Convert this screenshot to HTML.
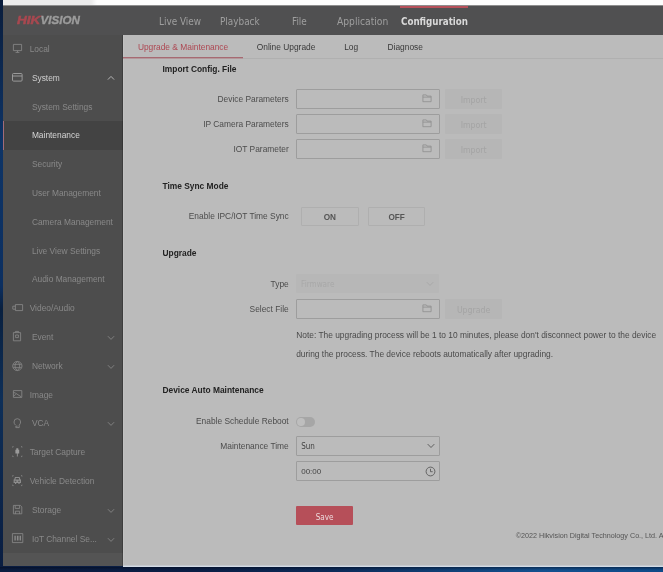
<!DOCTYPE html>
<html><head><meta charset="utf-8">
<style>
*{box-sizing:border-box;margin:0;padding:0}
html,body{width:663px;height:572px;overflow:hidden}
body{position:relative;background:#0d2f5e;font-family:"Liberation Sans",Arial,sans-serif;font-size:8.4px;color:#4a4a4a}
.abs{position:absolute}
#desk-left{left:0;top:0;width:3px;height:572px;background:linear-gradient(#0a1d3c,#0e3466 25%,#0c2f60 50%,#09203f 54%,#0e2f58 70%,#0a1d40)}
#desk-bot{left:0;top:565px;width:663px;height:7px;background:linear-gradient(rgba(0,0,0,0.0) 0,rgba(0,0,0,0.0) 28%,rgba(0,5,20,0.45) 29%,rgba(0,0,0,0) 75%),linear-gradient(90deg,#0a1c40,#0a1e45 30%,#0c2a58 50%,#0f3d72 65%,#13508f 82%,#0e4a88)}
#desk-bot:before{content:"";position:absolute;left:123px;top:0;width:540px;height:2px;background:linear-gradient(#c4c8ce 0,#c4c8ce 50%,#d3dbe5 50%,#d3dbe5 100%)}
#topwhite{left:3px;top:0;width:660px;height:5px;background:linear-gradient(90deg,#ececec 0,#ececec 88px,#fdfdfd 94px)}
#header{will-change:transform;left:3px;top:5px;width:660px;height:30px;background:#505051;border-top:1px solid #8e8e8e}
#sidebar{will-change:transform;left:3px;top:35px;width:119.7px;height:531px;background:#4d4d4d}
#main{will-change:transform;left:123px;top:35px;width:540px;height:530px;background:#bbbbbb}
.nav{position:absolute;top:0;height:29px;line-height:31px;font-family:"DejaVu Sans Condensed","DejaVu Sans","Liberation Sans",sans-serif;font-size:9.9px;color:#9f9f9f;white-space:nowrap}
.nav.act{color:#d9d9d9;font-weight:bold}
.logo{position:absolute;left:13.6px;top:-1.5px;height:29px;font:italic bold 11.6px/29.5px "Liberation Sans",sans-serif;white-space:nowrap}
.logo span{position:absolute;top:0;left:0;display:block;transform-origin:0 50%}
.logo .r{color:#a84850;-webkit-text-stroke:0.5px #a84850;transform:scaleX(1.17)}.logo .g{color:#9c9c9c;-webkit-text-stroke:0.35px #9c9c9c;left:23.8px;letter-spacing:0.05px}
.si{position:absolute;left:0;width:119.7px;height:28.8px;line-height:28.8px;color:#898989;white-space:nowrap}
.si span{position:absolute;left:0;top:0}
.si svg{position:absolute;overflow:visible}
.si.act{background:#434343;color:#d6d6d6}
.ic{fill:none;stroke:#858585;stroke-width:0.9}
.tab{position:absolute;top:0;height:23px;line-height:25.6px;color:#3a3a3a;white-space:nowrap}
.tab.act{color:#ad4752}
.h{position:absolute;font-weight:bold;color:#222;white-space:nowrap;line-height:10px}
.lbl{position:absolute;text-align:right;white-space:nowrap;line-height:10px;color:#4c4c4c}
.inp{position:absolute;border:1px solid #9d9d9d;border-radius:1px;background:#bbbbbb;height:19.6px}
.inp svg,.btn svg{position:absolute;overflow:visible}
.fo{fill:none;stroke:#909090;stroke-width:0.85}
.btn{position:absolute;height:19px;background:#b6b6b6;color:#a4a4a4;text-align:center;line-height:23px;border-radius:1px;font-family:"DejaVu Sans Condensed","DejaVu Sans","Liberation Sans",sans-serif;font-size:8.7px}
</style></head><body>
<div id="desk-left" class="abs"></div>
<div id="desk-bot" class="abs"></div>
<div id="topwhite" class="abs"></div>
<div id="header" class="abs">
  <div class="logo"><span class="r">HIK</span><span class="g">VISION</span></div>
  <div class="nav" style="left:156px">Live View</div>
  <div class="nav" style="left:217px">Playback</div>
  <div class="nav" style="left:289px">File</div>
  <div class="nav" style="left:334px;font-size:10.2px">Application</div>
  <div class="nav act" style="left:398px;font-size:9.7px">Configuration</div>
  <div class="abs" style="left:397.4px;top:0;width:67.6px;height:2px;background:#b6505a"></div>
</div>
<div id="sidebar" class="abs">
  <div class="si" style="top:0px"><span style="left:26.7px">Local</span>
    <svg style="left:9px;top:8px" width="12" height="12" viewBox="0 0 12 12"><path class="ic" d="M1.4 1.4h8.2v6.2h-8.2z M3.6 9.4h3.8 M5.5 7.6v1.8"/></svg></div>
  <div class="si" style="top:29px;color:#cfcfcf"><span style="left:28.9px">System</span>
    <svg style="left:9px;top:8px" width="12" height="12" viewBox="0 0 12 12"><path class="ic" style="stroke:#a2a2a2" d="M1.5 1.5h7.6q1 0 1 1v5.6q0 1 -1 1h-7.6q-1 0 -1 -1v-5.6q0 -1 1 -1z M0.5 4h9.6"/></svg>
    <svg style="left:104px;top:11px" width="8" height="6" viewBox="0 0 8 6"><path d="M0.9 4.6L4 1.4L7.1 4.6" fill="none" stroke="#b4b4b4" stroke-width="1"/></svg></div>
  <div class="si" style="top:58px"><span style="left:28.9px">System Settings</span></div>
  <div class="si act" style="top:86px"><span style="left:28.9px">Maintenance</span><div class="abs" style="left:0;top:0;width:1px;height:28.8px;background:#a26c78"></div></div>
  <div class="si" style="top:115px"><span style="left:28.9px">Security</span></div>
  <div class="si" style="top:144px"><span style="left:28.9px">User Management</span></div>
  <div class="si" style="top:173px"><span style="left:28.9px">Camera Management</span></div>
  <div class="si" style="top:202px"><span style="left:28.9px">Live View Settings</span></div>
  <div class="si" style="top:230px"><span style="left:28.9px">Audio Management</span></div>
  <div class="si" style="top:259px"><span style="left:26.7px">Video/Audio</span>
    <svg style="left:9px;top:9px" width="12" height="12" viewBox="0 0 12 12"><path class="ic" d="M3.4 1.6h7.2v6h-7.2z M3.4 3.2h-2.6v3h2.6"/></svg></div>
  <div class="si" style="top:288px"><span style="left:28.9px">Event</span>
    <svg style="left:9px;top:7.4px" width="12" height="13" viewBox="0 0 12 13"><path class="ic" d="M1.4 2.6h7.2v8.2h-7.2z M3.4 2.6v-1.2h3.2v1.2 M3.6 5h2.8v2.6h-2.8z"/></svg>
    <svg style="left:104px;top:12px" width="8" height="6" viewBox="0 0 8 6"><path d="M0.9 1.2L4 4.4L7.1 1.2" fill="none" stroke="#808080" stroke-width="1"/></svg></div>
  <div class="si" style="top:317px"><span style="left:28.9px">Network</span>
    <svg style="left:9px;top:7.5px" width="12" height="12" viewBox="0 0 12 12"><path class="ic" d="M5.35 1.4a4.6 4.6 0 1 0 0.01 0z M5.35 1.4q-2.4 2 -2.4 4.6t2.4 4.6 M5.35 1.4q2.4 2 2.4 4.6t-2.4 4.6 M1.1 4.3h8.5 M1.1 7.7h8.5"/></svg>
    <svg style="left:104px;top:12px" width="8" height="6" viewBox="0 0 8 6"><path d="M0.9 1.2L4 4.4L7.1 1.2" fill="none" stroke="#808080" stroke-width="1"/></svg></div>
  <div class="si" style="top:346px"><span style="left:26.7px">Image</span>
    <svg style="left:9px;top:8px" width="12" height="12" viewBox="0 0 12 12"><path class="ic" d="M1.4 1.6h8.4v6.8h-8.4z M1.6 3.4l2 0.8l5.6 3.6 M1.6 7l2.2 -1.6"/></svg></div>
  <div class="si" style="top:374px"><span style="left:28.9px">VCA</span>
    <svg style="left:9px;top:8px" width="12" height="13" viewBox="0 0 12 13"><path class="ic" d="M3.6 8.2q-1.6 -1.4 -1.6 -3.2a3.3 3.3 0 0 1 6.6 0q0 1.8 -1.4 3.2v2.4h-3.4v-1.4h1.8"/></svg>
    <svg style="left:104px;top:12px" width="8" height="6" viewBox="0 0 8 6"><path d="M0.9 1.2L4 4.4L7.1 1.2" fill="none" stroke="#808080" stroke-width="1"/></svg></div>
  <div class="si" style="top:403px"><span style="left:26.7px">Target Capture</span>
    <svg style="left:9px;top:8px" width="12" height="13" viewBox="0 0 12 13"><path d="M4.3 2.2h2v1.6h0.9v3.6h-1.5v3h-0.8v-3h-1.5v-3.6h0.9z" fill="#9a9a9a"/><path class="ic" d="M0.6 1.6v-1h1 M9 0.6h1v1 M0.6 9.6v1h1 M10 9.6v1h-1" style="stroke-width:0.8"/></svg></div>
  <div class="si" style="top:432px"><span style="left:26.7px">Vehicle Detection</span>
    <svg style="left:9px;top:8px" width="12" height="13" viewBox="0 0 12 13"><path transform="translate(0,-0.7)" d="M3 2.8h4.6l0.8 2.4h0.6v3.4h-1.4v1h-1.2v-1h-2.2v1h-1.2v-1h-1.4v-3.4h0.6z M3.8 3.8l-0.4 1.4h3.8l-0.4 -1.4z M2.8 6.4v1h1.6v-1z M6.2 6.4v1h1.6v-1z" fill="#8c8c8c" fill-rule="evenodd"/><path class="ic" d="M0.6 1.6v-1h1 M9 0.6h1v1 M0.6 9.6v1h1 M10 9.6v1h-1" style="stroke-width:0.8"/></svg></div>
  <div class="si" style="top:461px"><span style="left:28.9px">Storage</span>
    <svg style="left:9px;top:7.6px" width="12" height="12" viewBox="0 0 12 12"><path class="ic" d="M1.4 1.4h7l1.4 1.4v7h-8.4z M3.2 1.6v2.8h4.4v-2.8 M3.4 10v-2.8h4.2v2.8"/></svg>
    <svg style="left:104px;top:12px" width="8" height="6" viewBox="0 0 8 6"><path d="M0.9 1.2L4 4.4L7.1 1.2" fill="none" stroke="#808080" stroke-width="1"/></svg></div>
  <div class="si" style="top:490px"><span style="left:28.9px">IoT Channel Se...</span>
    <svg style="left:8px;top:7px" width="13" height="12" viewBox="0 0 13 12"><path class="ic" d="M1.4 1.6h10.4v9h-10.4z"/><path d="M3.4 3.8h1.4v4.8h-1.4z M5.9 3.8h1.6v4.8h-1.6z M8.6 3.8h1.4v4.8h-1.4z" fill="#8a8a8a"/></svg>
    <svg style="left:104px;top:12px" width="8" height="6" viewBox="0 0 8 6"><path d="M0.9 1.2L4 4.4L7.1 1.2" fill="none" stroke="#808080" stroke-width="1"/></svg></div>
  <div class="abs" style="left:0;top:517.7px;width:119.7px;height:13.3px;background:#545454"></div>
  <div class="abs" style="left:119px;top:0;width:1px;height:531px;background:rgba(0,0,0,0.2)"></div>
</div>
<div id="main" class="abs"><div class="abs" style="left:0;top:0;width:1px;height:530px;background:#c1c1c1"></div><div class="abs" style="left:-0.3px;top:0;width:540.3px;height:530px">
  <div class="abs" style="left:0;top:23px;width:540.3px;height:1px;background:#b0b0b0"></div>
  <div class="tab act" style="left:15.2px">Upgrade &amp; Maintenance</div>
  <div class="abs" style="left:0;top:22px;width:119.8px;height:2px;background:linear-gradient(#a66a72 0,#a66a72 50%,#b4979b 50%,#b4979b 100%)"></div>
  <div class="tab" style="left:134px">Online Upgrade</div>
  <div class="tab" style="left:221.5px">Log</div>
  <div class="tab" style="left:264.8px">Diagnose</div>

  <div class="h" style="left:39.8px;top:28.6px">Import Config. File</div>
  <div class="lbl" style="right:374.3px;top:59px">Device Parameters</div>
  <div class="lbl" style="right:374.3px;top:84px">IP Camera Parameters</div>
  <div class="lbl" style="right:374.3px;top:109px">IOT Parameter</div>
  <div class="inp" style="left:172.9px;top:54px;width:144px"><svg style="left:125px;top:4px" width="12" height="10" viewBox="0 0 12 10"><path class="fo" d="M0.9 0.9h3.4l0.8 1.2h4v5.6h-8.2z M0.9 3.1h8.2"/></svg></div>
  <div class="inp" style="left:172.9px;top:79px;width:144px"><svg style="left:125px;top:4px" width="12" height="10" viewBox="0 0 12 10"><path class="fo" d="M0.9 0.9h3.4l0.8 1.2h4v5.6h-8.2z M0.9 3.1h8.2"/></svg></div>
  <div class="inp" style="left:172.9px;top:104.3px;width:144px"><svg style="left:125px;top:4px" width="12" height="10" viewBox="0 0 12 10"><path class="fo" d="M0.9 0.9h3.4l0.8 1.2h4v5.6h-8.2z M0.9 3.1h8.2"/></svg></div>
  <div class="btn" style="left:322.3px;top:54px;width:57.2px;height:19.6px">Import</div>
  <div class="btn" style="left:322.3px;top:79px;width:57.2px;height:19.6px">Import</div>
  <div class="btn" style="left:322.3px;top:104.3px;width:57.2px;height:19.6px">Import</div>

  <div class="h" style="left:39.8px;top:145.5px">Time Sync Mode</div>
  <div class="lbl" style="right:374.3px;top:176px">Enable IPC/IOT Time Sync</div>
  <div class="btn" style="left:178.4px;top:172.4px;width:57.6px;height:18.6px;background:#bbbbbb;border:1px solid #afafaf;color:#555;font:bold 8.2px/19px 'Liberation Sans',sans-serif">ON</div>
  <div class="btn" style="left:245.2px;top:172.4px;width:57.6px;height:18.6px;background:#bbbbbb;border:1px solid #afafaf;color:#555;font:bold 8.2px/19px 'Liberation Sans',sans-serif">OFF</div>

  <div class="h" style="left:39.8px;top:213px">Upgrade</div>
  <div class="lbl" style="right:374.3px;top:244px">Type</div>
  <div class="btn" style="left:173.4px;top:239.2px;width:143.4px;text-align:left;padding-left:5px;color:#a8a8a8;background:#b7b7b7;line-height:21px;font-size:8.1px">Firmware<svg style="left:129.5px;top:7px" width="8" height="6" viewBox="0 0 8 6"><path d="M0.8 1.2L4 4.4L7.2 1.2" fill="none" stroke="#a6a6a6" stroke-width="0.9"/></svg></div>
  <div class="lbl" style="right:374.3px;top:269px">Select File</div>
  <div class="inp" style="left:172.9px;top:264px;width:144px"><svg style="left:125px;top:4px" width="12" height="10" viewBox="0 0 12 10"><path class="fo" d="M0.9 0.9h3.4l0.8 1.2h4v5.6h-8.2z M0.9 3.1h8.2"/></svg></div>
  <div class="btn" style="left:322.3px;top:264px;width:57.2px;height:19.6px">Upgrade</div>
  <div class="abs" style="left:173.5px;top:290.5px;white-space:nowrap;line-height:19.8px;color:#4a4a4a">Note: The upgrading process will be 1 to 10 minutes, please don't disconnect power to the device<br>during the process. The device reboots automatically after upgrading.</div>

  <div class="h" style="left:39.8px;top:350px">Device Auto Maintenance</div>
  <div class="lbl" style="right:374.3px;top:381px">Enable Schedule Reboot</div>
  <div class="abs" style="left:173.2px;top:382.3px;width:19.2px;height:9.5px;border-radius:5px;background:#a6a6a6"><div class="abs" style="left:0.8px;top:0.8px;width:7.9px;height:7.9px;border-radius:4px;background:#bebebe"></div></div>
  <div class="lbl" style="right:374.3px;top:406px">Maintenance Time</div>
  <div class="inp" style="left:172.9px;top:401px;width:144px;line-height:19.4px;padding-left:4.6px;color:#444;font-family:'DejaVu Sans Condensed','DejaVu Sans',sans-serif;font-size:8px">Sun<svg style="left:130px;top:6.2px" width="8" height="6" viewBox="0 0 8 6"><path d="M0.7 1.1L4 4.5L7.3 1.1" fill="none" stroke="#555" stroke-width="0.9"/></svg></div>
  <div class="inp" style="left:172.9px;top:426px;width:144px;line-height:19.4px;padding-left:4.6px;color:#444;font-family:'Liberation Sans',sans-serif;font-size:8px">00:00<svg style="left:128.2px;top:3.6px" width="11" height="11" viewBox="0 0 11 11"><circle cx="5.5" cy="5.5" r="4.4" fill="none" stroke="#555" stroke-width="0.85"/><path d="M5.5 2.8v2.9h2.2" fill="none" stroke="#555" stroke-width="0.85"/></svg></div>
  <div class="btn" style="left:173.3px;top:471.2px;width:57.3px;background:#b64f59;color:#ecd9db;border-radius:1px;font-size:8.1px;line-height:22.4px">Save</div>
  <div class="abs" style="left:393px;top:495.6px;white-space:nowrap;font-size:7.2px;color:#555;line-height:10px">©2022 Hikvision Digital Technology Co., Ltd. A</div>
</div></div>
</body></html>
